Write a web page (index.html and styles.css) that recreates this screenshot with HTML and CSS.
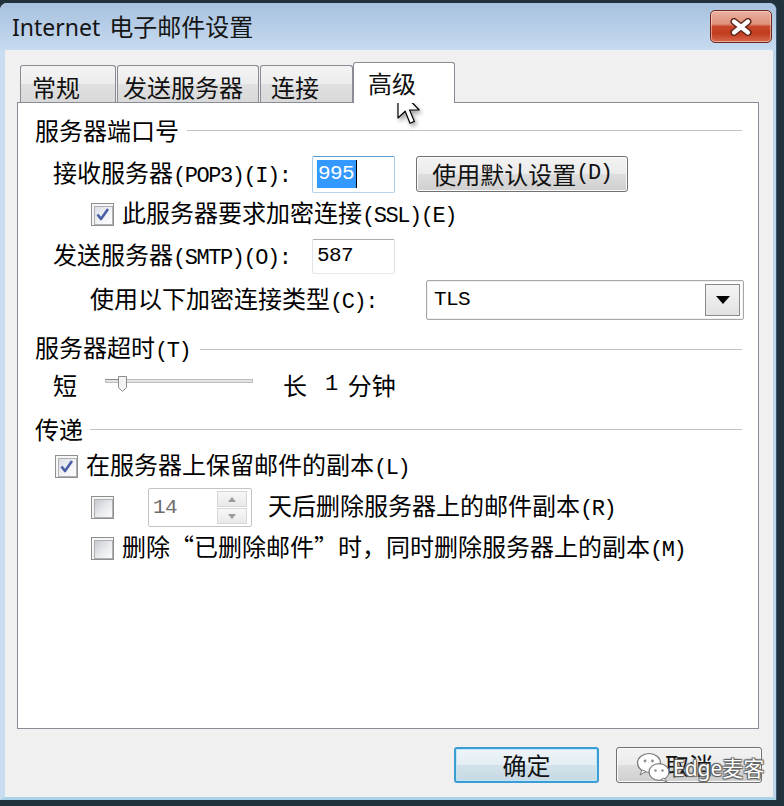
FILE: index.html
```html
<!DOCTYPE html>
<html lang="zh-CN">
<head>
<meta charset="utf-8">
<title>Internet 电子邮件设置</title>
<link rel="stylesheet" href="styles.css">
</head>
<body>
<div class="window">
  <div class="titlebar">
    <div class="title">Internet <span class="title-cn">电子邮件设置</span></div>
    <div class="close">
      <svg width="26" height="18" viewBox="0 0 26 18"><path d="M6 3.5 L20 14.5 M20 3.5 L6 14.5" stroke="#5b2419" stroke-width="7" stroke-linecap="round"/><path d="M6 3.5 L20 14.5 M20 3.5 L6 14.5" stroke="#ffffff" stroke-width="4.2" stroke-linecap="round"/></svg>
    </div>
  </div>
  <div class="client">
    <div class="tabs">
      <div class="tab t1">常规</div>
      <div class="tab t2">发送服务器</div>
      <div class="tab t3">连接</div>
      <div class="tab t4 active">高级</div>
    </div>
    <div class="panel">
      <div class="section s1"><span>服务器端口号</span><i class="line l1"></i></div>

      <div class="row r-pop">
        <span class="lbl-port">接收服务器<span class="m">(POP3)(I):</span></span>
        <div class="input focus"><span class="sel">995</span><span class="caret"></span></div>
        <div class="btn btn-defset">使用默认设置<span class="m">(D)</span></div>
      </div>

      <div class="row r-ssl">
        <span class="cb on"><svg width="17" height="17" viewBox="0 0 17 17"><path d="M3.5 8.5 L7 13 L14 3" fill="none" stroke="#4a5ea6" stroke-width="2.6" stroke-linejoin="round"/></svg></span>
        <span class="cb-text">此服务器要求加密连接<span class="m">(SSL)(E)</span></span>
      </div>

      <div class="row r-smtp">
        <span class="lbl-port">发送服务器<span class="m">(SMTP)(O):</span></span>
        <div class="input small"><span class="val">587</span></div>
      </div>

      <div class="row r-enc">
        <span class="lbl-enc">使用以下加密连接类型<span class="m">(C):</span></span>
        <div class="select">
          <span class="val">TLS</span>
          <span class="dd"><svg width="14" height="8" viewBox="0 0 14 8"><path d="M0 0 H14 L7 8 Z" fill="#000"/></svg></span>
        </div>
      </div>

      <div class="section s2"><span>服务器超时<span class="m">(T)</span></span><i class="line l2"></i></div>

      <div class="row r-slider">
        <span class="short">短</span>
        <span class="slider"><svg width="148" height="24" viewBox="0 0 148 24"><rect x="0.5" y="6.5" width="147" height="3" fill="#e4e4e4" stroke="#bcbcbc"/><path d="M0.5 6.5 H13" stroke="#8a8a8a" stroke-width="1"/><path d="M13.5 3.5 H21.5 V14.5 L17.5 18.5 L13.5 14.5 Z" fill="#f3f3f3" stroke="#8c8c8c"/></svg></span>
        <span class="long">长</span>
        <span class="m one">1</span>
        <span class="minute">分钟</span>
      </div>

      <div class="section s3"><span>传递</span><i class="line l3"></i></div>

      <div class="row r-keep">
        <span class="cb on"><svg width="17" height="17" viewBox="0 0 17 17"><path d="M3.5 8.5 L7 13 L14 3" fill="none" stroke="#4a5ea6" stroke-width="2.6" stroke-linejoin="round"/></svg></span>
        <span class="cb-text">在服务器上保留邮件的副本<span class="m">(L)</span></span>
      </div>

      <div class="row r-days">
        <span class="cb"></span>
        <div class="spin">
          <span class="val">14</span>
          <span class="arrows">
            <span class="arr"><svg width="8" height="5" viewBox="0 0 8 5"><path d="M0 5 H8 L4 0 Z" fill="#9a9a9a"/></svg></span>
            <span class="arr"><svg width="8" height="5" viewBox="0 0 8 5"><path d="M0 0 H8 L4 5 Z" fill="#9a9a9a"/></svg></span>
          </span>
        </div>
        <span class="days-text">天后删除服务器上的邮件副本<span class="m">(R)</span></span>
      </div>

      <div class="row r-del">
        <span class="cb"></span>
        <span class="cb-text">删除<span class="ql">“</span>已删除邮件<span class="qr">”</span>时，同时删除服务器上的副本<span class="m">(M)</span></span>
      </div>
    </div>

    <div class="footer">
      <div class="btn btn-ok">确定</div>
      <div class="btn btn-cancel">取消</div>
    </div>
  </div>
</div>

<div class="cursor">
  <svg width="26" height="40" viewBox="0 0 13 20"><path d="M1 1 V16 L4.6 12.6 L7 18.6 L9.2 17.7 L6.8 12 H11.6 Z" fill="#ffffff" stroke="#000000" stroke-width="0.6" stroke-linejoin="round"/></svg>
</div>

<div class="wm">
  <svg width="36" height="32" viewBox="0 0 36 32">
    <ellipse cx="13" cy="11" rx="11.5" ry="9.5" fill="#ffffff" stroke="#7a7a7a" stroke-width="1.2"/>
    <path d="M6 18 L4 23 L10 19.5 Z" fill="#ffffff" stroke="#7a7a7a" stroke-width="1"/>
    <circle cx="9" cy="9" r="1.4" fill="#8a8a8a"/>
    <circle cx="16.5" cy="9" r="1.4" fill="#8a8a8a"/>
    <ellipse cx="23" cy="20" rx="10" ry="8.3" fill="#ffffff" stroke="#7a7a7a" stroke-width="1.2"/>
    <path d="M28 26 L31 30 L25 27.5 Z" fill="#ffffff" stroke="#7a7a7a" stroke-width="1"/>
    <circle cx="19.5" cy="18.5" r="1.2" fill="#8a8a8a"/>
    <circle cx="26.5" cy="18.5" r="1.2" fill="#8a8a8a"/>
  </svg>
  <span class="wm-text">Edge麦客</span>
</div>
</body>
</html>
```

FILE: styles.css
```css
* { box-sizing: border-box; }
html, body { margin: 0; padding: 0; }
body {
  width: 784px;
  height: 806px;
  overflow: hidden;
  background: #22323c;
  padding-top: 3px;
  position: relative;
  font-family: "Noto Sans CJK SC", "Noto Sans", sans-serif;
  color: #000;
}
.m {
  font-family: "Liberation Mono", "Noto Sans CJK SC", monospace;
  font-size: 22px;
  letter-spacing: -1.44px;
}

.window {
  width: 776px;
  height: 797px;
  display: flex;
  flex-direction: column;
  border-radius: 7px 7px 0 0;
  overflow: hidden;
  background: #f0f0f0;
  box-shadow: 1px 0 0 #3b5a72;
}

.titlebar {
  height: 47px;
  flex: none;
  display: flex;
  justify-content: space-between;
  align-items: flex-start;
  background: linear-gradient(#a7c1de, #b9cfe8 55%, #c6dbef);
  padding: 0 4px 0 12px;
}
.title {
  font-family: "Noto Sans", "Noto Sans CJK SC", sans-serif;
  font-size: 23px;
  line-height: 28px;
  padding-top: 10px;
  color: #151515;
}
.title-cn { font-size: 24px; margin-left: 3px; }
.close {
  margin-top: 7px;
  width: 62px;
  height: 33px;
  border: 1px solid #6e2a20;
  border-radius: 5px;
  background: linear-gradient(#eab0a0 0%, #df917c 42%, #c9482b 50%, #c13c1f 72%, #d9694c 100%);
  box-shadow: inset 0 0 0 1px rgba(255, 220, 210, 0.55);
  display: flex;
  align-items: center;
  justify-content: center;
}

.client {
  flex: 1;
  border-left: 5px solid #c9ddf0;
  border-right: 3px solid #bdd4ea;
  border-bottom: 3px solid #a7d2e7;
  padding: 12px 0 0 12px;
  display: flex;
  flex-direction: column;
}

.tabs {
  display: flex;
  align-items: flex-end;
  height: 40px;
  padding-left: 3px;
  position: relative;
  z-index: 1;
}
.tab {
  height: 37px;
  border: 1px solid #898c95;
  border-bottom: none;
  border-radius: 3px 3px 0 0;
  background: linear-gradient(#f4f4f4, #ececec 50%, #e0e0e0 51%, #d9d9d9);
  font-size: 24px;
  line-height: 30px;
  padding-top: 6px;
  white-space: nowrap;
  color: #111;
}
.t1 { width: 96px; padding-left: 11px; margin-right: 1px; }
.t2 { width: 142px; padding-left: 5px; margin-right: 1px; }
.t3 { width: 93px; padding-left: 10px; }
.t4 { width: 102px; padding-left: 14px; }
.tab.active {
  height: 41px;
  margin-bottom: -1px;
  background: #fff;
  padding-top: 5px;
}

.panel {
  width: 742px;
  height: 627px;
  border: 1px solid #898c95;
  background: #fff;
  padding: 12px 16px 0 17px;
}

.section {
  display: flex;
  align-items: center;
  font-size: 24px;
  line-height: 28px;
  height: 28px;
  white-space: nowrap;
}
.s1 { height: 30px; }
.s2 { margin-top: 15px; }
.s3 { margin-top: 18px; }
.line {
  flex: 1;
  height: 1px;
  background: #c3c3c3;
  box-shadow: 0 1px 0 #ffffff;
}
.l1 { margin-left: 8px; }
.l2 { margin-left: 10px; }
.l3 { margin-left: 7px; }

.row {
  display: flex;
  align-items: center;
  font-size: 24px;
  line-height: 28px;
  white-space: nowrap;
}
.r-pop { margin-top: 10px; height: 38px; }
.r-ssl { margin-top: 10px; height: 23px; }
.r-smtp { margin-top: 12px; height: 36px; }
.r-enc { margin-top: 6px; height: 40px; }
.r-slider { margin-top: 10px; height: 24px; }
.r-keep { margin-top: 12px; height: 23px; }
.r-days { margin-top: 10px; height: 39px; }
.r-del { margin-top: 10px; height: 23px; }

.lbl-port { margin-left: 18px; width: 259px; flex: none; }
.lbl-enc { margin-left: 55px; width: 336px; flex: none; }

.input {
  width: 83px;
  height: 37px;
  border: 1px solid;
  border-color: #abadb3 #dbdfe6 #e3e9ef #e2e3ea;
  border-radius: 2px;
  background: #fff;
  padding-left: 4px;
  display: flex;
  align-items: center;
  font-family: "Liberation Mono", monospace;
  font-size: 21px;
  letter-spacing: -0.6px;
  flex: none;
}
.input.focus { border-color: #5b9bd0 #a9cbe8 #b8d4ec #a9cbe8; }
.input.small { height: 35px; }
.sel {
  background: #3399ff;
  color: #fff;
  line-height: 28px;
  padding: 0 2px 0 1px;
}
.caret { width: 1px; height: 28px; background: #000; }

.btn {
  display: flex;
  align-items: center;
  justify-content: center;
  border: 1px solid #707070;
  border-radius: 3px;
  background: linear-gradient(#f3f3f3, #ebebeb 50%, #dddddd 51%, #cfcfcf);
  box-shadow: inset 0 0 0 1px #fbfbfb;
  font-size: 24px;
  line-height: 28px;
  color: #111;
  flex: none;
  white-space: nowrap;
}
.btn-defset { margin-left: 21px; width: 212px; height: 36px; }

.cb {
  width: 23px;
  height: 23px;
  border: 1px solid #8f8f8f;
  background: #f6f6f6;
  padding: 2px;
  position: relative;
  flex: none;
}
.cb::before {
  content: "";
  display: block;
  width: 100%;
  height: 100%;
  border: 1px solid #aeb0b3;
  background: linear-gradient(135deg, #c7cacf, #e9ebee 55%, #fbfbfb);
}
.cb.on::before { background: linear-gradient(135deg, #dadee6, #f3f4f7 60%, #fdfdfd); }
.cb svg { position: absolute; left: 2px; top: 2px; }
.r-ssl .cb, .r-days .cb, .r-del .cb { margin-left: 56px; }
.r-keep .cb { margin-left: 20px; }
.cb-text { margin-left: 8px; }

.select {
  width: 318px;
  height: 40px;
  border: 1px solid #a8a8a8;
  border-radius: 2px;
  background: #fff;
  display: flex;
  align-items: center;
  justify-content: space-between;
  padding: 0 3px 0 7px;
  box-shadow: inset 0 0 0 1px #f0f0f0;
  flex: none;
}
.select .val { font-family: "Liberation Mono", monospace; font-size: 21px; letter-spacing: -0.6px; }
.dd {
  width: 35px;
  height: 32px;
  border: 1px solid #8a8a8a;
  background: linear-gradient(#f4f4f4, #e2e2e2);
  display: flex;
  align-items: center;
  justify-content: center;
}

.short { margin-left: 18px; }
.slider { margin-left: 28px; display: flex; }
.long { margin-left: 30px; }
.one { margin-left: 18px; }
.minute { margin-left: 11px; }

.spin {
  margin-left: 34px;
  width: 104px;
  height: 39px;
  border: 1px solid #c4c4c4;
  border-radius: 2px;
  background: #fff;
  display: flex;
  flex: none;
}
.spin .val {
  flex: 1;
  padding-left: 4px;
  color: #6d6d6d;
  font-family: "Liberation Mono", monospace;
  font-size: 21px;
  letter-spacing: -0.6px;
  display: flex;
  align-items: center;
}
.arrows {
  width: 30px;
  margin: 2px 4px 2px 0;
  display: flex;
  flex-direction: column;
  gap: 1px;
}
.arr {
  flex: 1;
  border: 1px solid #d8d8d8;
  background: linear-gradient(#f7f7f7, #e9e9e9);
  display: flex;
  align-items: center;
  justify-content: center;
}
.days-text { margin-left: 16px; }

.ql { display: inline-block; width: 24px; text-align: right; }
.qr { display: inline-block; width: 24px; text-align: left; }

.footer {
  display: flex;
  justify-content: flex-end;
  gap: 17px;
  padding-right: 11px;
  margin-top: 18px;
}
.btn-ok {
  width: 145px;
  height: 36px;
  border: 2px solid #3c9cd4;
  box-shadow: inset 0 0 0 1px #bfe6f8;
  background: linear-gradient(#eef5f9, #e3edf3 50%, #d3e2ea 51%, #c7d9e3);
}
.btn-cancel { width: 146px; height: 36px; }

.cursor {
  position: absolute;
  left: 396px;
  top: 86px;
  filter: drop-shadow(2px 3px 2px rgba(0, 0, 0, 0.35));
}

.wm {
  position: absolute;
  left: 636px;
  top: 752px;
  display: flex;
  align-items: center;
  gap: 1px;
}
.wm-text {
  font-family: "Noto Sans", "Noto Sans CJK SC", sans-serif;
  font-size: 21px;
  line-height: 28px;
  color: #ffffff;
  text-shadow: 0 0 1px #444, 1px 1px 1px #666, -1px -1px 1px #666, 1px -1px 1px #666, -1px 1px 1px #666;
}
```
